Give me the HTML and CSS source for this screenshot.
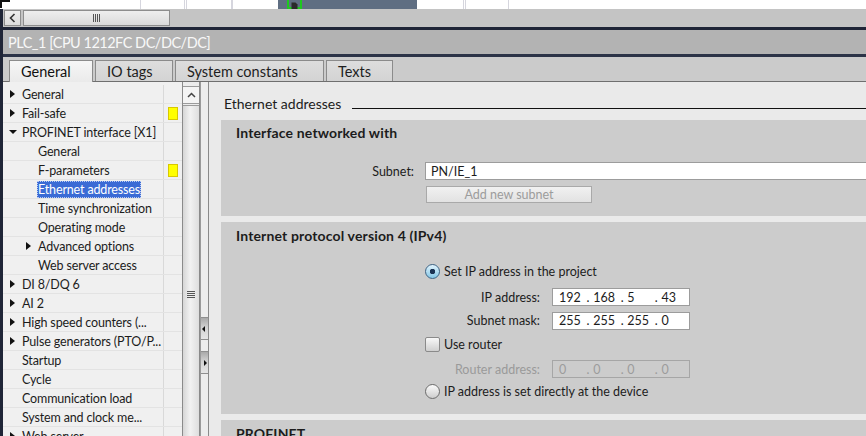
FILE: index.html
```html
<!DOCTYPE html>
<html lang="en">
<head>
    <meta charset="UTF-8">
    <title>PLC_1 properties</title>
    <link rel="stylesheet" href="styles.css">
</head>
<body>

    <!-- strip of the editor above, cut off by the inspector window -->
    <div class="topstrip">
        <div class="ts-cell ts-a"></div>
        <div class="ts-cell ts-b"></div>
        <div class="ts-cell ts-c"></div>
        <div class="ts-cell ts-d"></div>
        <div class="ts-cell ts-e"></div>
        <div class="ts-cell ts-f"></div>
        <div class="ts-block">
            <svg width="15" height="9" viewBox="0 0 15 9">
                <rect x="1" y="-2" width="13" height="10" fill="none" stroke="#1ec81e" stroke-width="2"/>
                <path d="M4.5 2.5 H8.5 L10.5 4.5 V9 H4.5 Z" fill="#2b2b2b"/>
            </svg>
        </div>
        <div class="ts-cell ts-g"></div>
        <div class="ts-cell ts-h"></div>
        <div class="ts-cell ts-i"></div>
    </div>

    <div class="window">
        <div class="hscroll">
            <div class="hs-btn">
                <svg width="7" height="10" viewBox="0 0 7 10"><path d="M5.5 1 L1.5 5 L5.5 9" fill="none" stroke="#333" stroke-width="1.6"/></svg>
            </div>
            <div class="hs-thumb"><span class="grip"></span></div>
        </div>

        <div class="titlebar">PLC_1 [CPU 1212FC DC/DC/DC]</div>

        <div class="tabbar">
            <div class="tab tab-general active">General</div>
            <div class="tab tab-io">IO tags</div>
            <div class="tab tab-const">System constants</div>
            <div class="tab tab-texts">Texts</div>
        </div>

        <div class="main">
            <div class="tree">
                <div class="tree-row"><div class="tree-label"><span class="arrow right"></span>General</div><div class="tree-mark"></div></div>
                <div class="tree-row"><div class="tree-label"><span class="arrow right"></span>Fail-safe</div><div class="tree-mark"><span class="mark"></span></div></div>
                <div class="tree-row"><div class="tree-label"><span class="arrow down"></span>PROFINET interface [X1]</div><div class="tree-mark"></div></div>
                <div class="tree-row child"><div class="tree-label"><span class="arrow"></span>General</div><div class="tree-mark"></div></div>
                <div class="tree-row child"><div class="tree-label"><span class="arrow"></span>F-parameters</div><div class="tree-mark"><span class="mark"></span></div></div>
                <div class="tree-row child"><div class="tree-label"><span class="arrow"></span><span class="sel">Ethernet addresses</span></div><div class="tree-mark"></div></div>
                <div class="tree-row child"><div class="tree-label"><span class="arrow"></span>Time synchronization</div><div class="tree-mark"></div></div>
                <div class="tree-row child"><div class="tree-label"><span class="arrow"></span>Operating mode</div><div class="tree-mark"></div></div>
                <div class="tree-row child"><div class="tree-label"><span class="arrow right"></span>Advanced options</div><div class="tree-mark"></div></div>
                <div class="tree-row child"><div class="tree-label"><span class="arrow"></span>Web server access</div><div class="tree-mark"></div></div>
                <div class="tree-row"><div class="tree-label"><span class="arrow right"></span>DI 8/DQ 6</div><div class="tree-mark"></div></div>
                <div class="tree-row"><div class="tree-label"><span class="arrow right"></span>AI 2</div><div class="tree-mark"></div></div>
                <div class="tree-row"><div class="tree-label"><span class="arrow right"></span>High speed counters (...</div><div class="tree-mark"></div></div>
                <div class="tree-row"><div class="tree-label"><span class="arrow right"></span>Pulse generators (PTO/P...</div><div class="tree-mark"></div></div>
                <div class="tree-row"><div class="tree-label"><span class="arrow"></span>Startup</div><div class="tree-mark"></div></div>
                <div class="tree-row"><div class="tree-label"><span class="arrow"></span>Cycle</div><div class="tree-mark"></div></div>
                <div class="tree-row"><div class="tree-label"><span class="arrow"></span>Communication load</div><div class="tree-mark"></div></div>
                <div class="tree-row"><div class="tree-label"><span class="arrow"></span>System and clock me...</div><div class="tree-mark"></div></div>
                <div class="tree-row"><div class="tree-label"><span class="arrow right"></span>Web server</div><div class="tree-mark"></div></div>
            </div>

            <div class="vscroll">
                <div class="vs-up">
                    <svg width="9" height="6" viewBox="0 0 9 6"><path d="M1 5 L4.5 1.5 L8 5" fill="none" stroke="#444" stroke-width="1.5"/></svg>
                </div>
                <div class="vs-thumb"><span class="grip-h"></span></div>
            </div>

            <div class="splitter">
                <div class="sp-btn"><span class="tri-left"></span></div>
                <div class="sp-btn"><span class="tri-right"></span></div>
            </div>

            <div class="content">
                <div class="heading">
                    <span class="heading-title">Ethernet addresses</span>
                    <span class="heading-line"></span>
                </div>

                <div class="section sec-net">
                    <div class="section-title">Interface networked with</div>
                    <div class="field-row">
                        <span class="label">Subnet:</span>
                        <div class="text-input">PN/IE_1</div>
                    </div>
                    <div class="btn">Add new subnet</div>
                </div>

                <div class="section sec-ip">
                    <div class="section-title">Internet protocol version 4 (IPv4)</div>
                    <div class="ip-grid">
                        <div class="opt-row"><span class="radio on"></span>Set IP address in the project</div>
                        <div class="addr-row">
                            <span class="label">IP address:</span>
                            <div class="ip-input">
                                <span class="octet">192</span><span class="dot">.</span>
                                <span class="octet">168</span><span class="dot">.</span>
                                <span class="octet">5</span><span class="dot">.</span>
                                <span class="octet">43</span>
                            </div>
                        </div>
                        <div class="addr-row">
                            <span class="label">Subnet mask:</span>
                            <div class="ip-input">
                                <span class="octet">255</span><span class="dot">.</span>
                                <span class="octet">255</span><span class="dot">.</span>
                                <span class="octet">255</span><span class="dot">.</span>
                                <span class="octet">0</span>
                            </div>
                        </div>
                        <div class="opt-row"><span class="checkbox"></span>Use router</div>
                        <div class="addr-row">
                            <span class="label disabled">Router address:</span>
                            <div class="ip-input disabled">
                                <span class="octet">0</span><span class="dot">.</span>
                                <span class="octet">0</span><span class="dot">.</span>
                                <span class="octet">0</span><span class="dot">.</span>
                                <span class="octet">0</span>
                            </div>
                        </div>
                        <div class="opt-row"><span class="radio"></span>IP address is set directly at the device</div>
                    </div>
                </div>

                <div class="section sec-pn">
                    <div class="section-title">PROFINET</div>
                </div>
            </div>
        </div>
    </div>

</body>
</html>
```

FILE: styles.css
```css
/* TIA style inspector window */
* {
    box-sizing: border-box;
}

body {
    margin: 0;
    width: 866px;
    height: 436px;
    overflow: hidden;
    background-color: #eaeaea;
    color: #1c1c1c;
    font-family: Lato, "Noto Sans", sans-serif;
}

/* Editor strip on top */
.topstrip {
    display: flex;
    height: 9px;
    background-color: #fff;
    position: relative;
}

.topstrip::before {
    content: "";
    position: absolute;
    left: 0;
    top: 0;
    width: 8px;
    height: 6px;
    border-top: 2px solid #111;
    border-left: 2px solid #111;
}

.ts-cell {
    flex: none;
    border-right: 1px solid #d6d6de;
}

.ts-a { width: 141px; }
.ts-b { width: 44px; }
.ts-c { width: 2px; }
.ts-d { width: 45px; }
.ts-e { width: 1px; }
.ts-f { width: 45px; border-right: none; }
.ts-g { width: 47px; }
.ts-h { width: 2px; }
.ts-i { width: 43px; }

.ts-block {
    flex: none;
    width: 139px;
    background-color: #5f6e82;
    padding-left: 9px;
}

.ts-block svg {
    display: block;
}

/* Window */
.window {
    height: 427px;
    border-left: 3px solid #1f2537;
    display: flex;
    flex-direction: column;
}

.hscroll {
    height: 18px;
    flex: none;
    background-color: #c4c4c4;
    display: flex;
    gap: 2px;
    padding: 1px 0 1px 1px;
}

.hs-btn {
    width: 17px;
    border: 1px solid #8d8d8d;
    background: linear-gradient(#eeeeee, #dcdcdc);
    display: flex;
    align-items: center;
    justify-content: center;
}

.hs-thumb {
    width: 147px;
    border: 1px solid #8d8d8d;
    background: linear-gradient(#eeeeee, #dadada);
    display: flex;
    align-items: center;
    justify-content: center;
}

.grip {
    width: 7px;
    height: 8px;
    background: repeating-linear-gradient(90deg, #555 0 1px, transparent 1px 2px);
}

.titlebar {
    height: 30px;
    flex: none;
    border-top: 3px solid #1f2537;
    border-bottom: 3px solid #2c3347;
    background-color: #b3b3b3;
    color: #f8f8f8;
    font-size: 14.5px;
    letter-spacing: -0.5px;
    padding-left: 5px;
    display: flex;
    align-items: center;
}

.tabbar {
    height: 25px;
    flex: none;
    background-color: #cbcbcb;
    border-bottom: 1px solid #6f6f6f;
    display: flex;
    align-items: flex-end;
    gap: 2px;
    padding-left: 6px;
}

.tab {
    height: 21px;
    padding-left: 11px;
    border: 1px solid #8b8b8b;
    border-bottom: none;
    background: linear-gradient(#dddddd, #d3d3d3);
    color: #1e1e1e;
    font-size: 14.5px;
    display: flex;
    align-items: center;
}

.tab-general { width: 84px; }
.tab-io { width: 78px; }
.tab-const { width: 149px; }
.tab-texts { width: 67px; }

.tab.active {
    height: 22px;
    margin-bottom: -1px;
    background: linear-gradient(#f6f6f6, #eaeaea);
    color: #111;
}

.main {
    flex: 1;
    min-height: 0;
    display: flex;
    overflow: hidden;
}

/* Navigation tree */
.tree {
    width: 179px;
    flex: none;
    background-color: #f0f0f0;
    padding-top: 3px;
}

.tree-row {
    display: flex;
    height: 19px;
    border-bottom: 1px solid #e3e3e3;
}

.tree-label {
    width: 161px;
    flex: none;
    border-right: 1px solid #d9d9d9;
    display: flex;
    align-items: center;
    padding-left: 7px;
    font-size: 12.5px;
    letter-spacing: -0.15px;
    white-space: nowrap;
    overflow: hidden;
}

.tree-row.child .tree-label {
    padding-left: 23px;
}

.tree-mark {
    flex: 1;
    display: flex;
    align-items: center;
    justify-content: center;
}

.mark {
    width: 10px;
    height: 13px;
    background-color: #ffff00;
    border: 1px solid #d8c800;
}

.arrow {
    width: 12px;
    flex: none;
}

.arrow.right::before {
    content: "";
    display: block;
    width: 0;
    border-left: 5px solid #111;
    border-top: 4px solid transparent;
    border-bottom: 4px solid transparent;
}

.arrow.down::before {
    content: "";
    display: block;
    width: 0;
    margin-left: -1px;
    border-top: 4px solid #111;
    border-left: 4px solid transparent;
    border-right: 4px solid transparent;
}

.sel {
    background-color: #3b6bd5;
    color: #fff;
    line-height: 17px;
    padding: 0 1px;
    margin-left: -1px;
    outline: 1px dotted #b9cbf2;
    outline-offset: -1px;
}

/* Scroll bar next to the tree */
.vscroll {
    width: 18px;
    flex: none;
    border-left: 1px solid #8a8a8a;
    border-right: 1px solid #8a8a8a;
    background-color: #ececec;
    display: flex;
    flex-direction: column;
    padding-top: 4px;
}

.vs-up {
    height: 18px;
    flex: none;
    border-top: 1px solid #9b9b9b;
    border-bottom: 1px solid #9b9b9b;
    background-color: #f4f4f4;
    display: flex;
    align-items: center;
    justify-content: center;
}

.vs-thumb {
    flex: 1;
    margin-top: 1px;
    border-top: 1px solid #9b9b9b;
    background: linear-gradient(90deg, #d6d6d6, #f2f2f2 45%, #dedede);
    display: flex;
    flex-direction: column;
    align-items: center;
    padding-top: 185px;
}

.grip-h {
    width: 8px;
    height: 7px;
    background: repeating-linear-gradient(#555 0 1px, transparent 1px 2px);
}

.splitter {
    width: 9px;
    flex: none;
    border-left: 1px solid #9a9a9a;
    border-right: 1px solid #8a8a8a;
    background-color: #ededed;
    padding-top: 235px;
    display: flex;
    flex-direction: column;
    gap: 11px;
}

.sp-btn {
    height: 23px;
    border-top: 1px solid #8f8f8f;
    border-bottom: 1px solid #8f8f8f;
    background: linear-gradient(#a9a9a9, #d2d2d2 45%, #e6e6e6);
    display: flex;
    align-items: center;
    padding-left: 1px;
}

.tri-left {
    width: 0;
    border-right: 3px solid #111;
    border-top: 3px solid transparent;
    border-bottom: 3px solid transparent;
}

.tri-right {
    width: 0;
    margin-left: 2px;
    border-left: 3px solid #111;
    border-top: 3px solid transparent;
    border-bottom: 3px solid transparent;
}

/* Properties */
.content {
    width: 680px;
    flex: none;
    padding-left: 12px;
}

.heading {
    height: 38px;
    display: flex;
    align-items: flex-start;
    padding: 13px 0 0 3px;
}

.heading-title {
    font-size: 14px;
    line-height: 18px;
}

.heading-line {
    flex: 1;
    height: 14px;
    margin-left: 11px;
    border-bottom: 1px solid #111;
}

.section {
    background-color: #cccccc;
    margin-bottom: 6px;
}

.section-title {
    font-size: 14px;
    font-weight: 700;
    letter-spacing: 0.15px;
    line-height: 18px;
    padding-left: 15px;
}

.label {
    flex: none;
    text-align: right;
    font-size: 12.5px;
}

.label.disabled {
    color: #9a9a9a;
}

.sec-net {
    padding: 4px 0 13px;
}

.field-row {
    display: flex;
    align-items: center;
    height: 18px;
    margin-top: 20px;
}

.sec-net .label {
    width: 193px;
    margin-right: 11px;
}

.text-input {
    flex: 1;
    height: 18px;
    background-color: #fff;
    border: 1px solid #9c9c9c;
    border-right: none;
    padding-left: 5px;
    font-size: 12.5px;
    display: flex;
    align-items: center;
}

.btn {
    width: 166px;
    height: 17px;
    margin: 6px 0 0 205px;
    border: 1px solid #a9a9a9;
    background: linear-gradient(#f1f1f1, #e2e2e2);
    color: #9c9c9c;
    font-size: 12.5px;
    display: flex;
    align-items: center;
    justify-content: center;
}

.sec-ip {
    padding: 5px 0 12px;
}

.sec-ip .section-title {
    margin-bottom: 14px;
}

.ip-grid {
    display: grid;
    grid-template-rows: 24px 28px 19px 28px 22px 22px;
    font-size: 12.5px;
}

.opt-row {
    display: flex;
    align-items: center;
    gap: 4px;
    padding-left: 204px;
}

.addr-row {
    display: flex;
    align-items: center;
}

.sec-ip .label {
    width: 319px;
    margin-right: 12px;
}

.ip-input {
    width: 138px;
    height: 18px;
    border: 1px solid #9c9c9c;
    background-color: #fff;
    padding-left: 6px;
    display: flex;
    align-items: center;
}

.ip-input.disabled {
    background-color: transparent;
    border-color: #a6a6a6;
    color: #9c9c9c;
}

.octet {
    width: 29px;
}

.dot {
    width: 7px;
}

.radio {
    width: 15px;
    height: 15px;
    flex: none;
    border-radius: 50%;
    border: 1px solid #6c6c6c;
    background: linear-gradient(#fbfbfb, #cdcdcd);
}

.radio.on {
    border-color: #3d6384;
    background: radial-gradient(circle, #1b3353 0 2.5px, transparent 3px), linear-gradient(#e2f4fd, #84c6e6);
}

.checkbox {
    width: 15px;
    height: 15px;
    flex: none;
    border: 1px solid #8a8a8a;
    border-radius: 2px;
    background: linear-gradient(#f8f8f8, #cfcfcf);
}

.sec-pn {
    padding-top: 5px;
    height: 40px;
}
```
